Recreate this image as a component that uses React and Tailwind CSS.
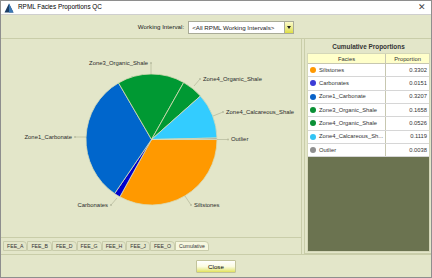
const facies = [
  { name: 'Siltstones', value: 0.3302, color: '#ff9900', dot: '#ff9900' },
  { name: 'Carbonates', value: 0.0151, color: '#0000cc', dot: '#3b3bd6' },
  { name: 'Zone1_Carbonate', value: 0.3207, color: '#0066cc', dot: '#0a62c8' },
  { name: 'Zone3_Organic_Shale', value: 0.1658, color: '#009933', dot: '#0a8f35' },
  { name: 'Zone4_Organic_Shale', value: 0.0526, color: '#009933', dot: '#0a8f35' },
  { name: 'Zone4_Calcareous_Shale', short: 'Zone4_Calcareous_Sh...', value: 0.1119, color: '#33ccff', dot: '#33c4f5' },
  { name: 'Outlier', value: 0.0038, color: '#999999', dot: '#8f8f8f' },
];

// label position + leader line, page coordinates
const labels = [
  { text: 'Siltstones', x: 194, y: 207, anchor: 'start', line: [185, 196, 191, 205] },
  { text: 'Carbonates', x: 108, y: 207, anchor: 'end', line: [117, 198, 111, 205] },
  { text: 'Zone1_Carbonate', x: 72, y: 139, anchor: 'end', line: [86, 137, 75, 137] },
  { text: 'Zone3_Organic_Shale', x: 148, y: 65, anchor: 'end', line: [151, 74, 151, 63] },
  { text: 'Zone4_Organic_Shale', x: 203, y: 81, anchor: 'start', line: [194, 86, 200, 79] },
  { text: 'Zone4_Calcareous_Shale', x: 226, y: 114, anchor: 'start', line: [213, 116, 223, 112] },
  { text: 'Outlier', x: 231, y: 141, anchor: 'start', line: [217, 139.5, 228, 139.5] },
];

const tabs = ['FEE_A', 'FEE_B', 'FEE_D', 'FEE_G', 'FEE_H', 'FEE_J', 'FEE_O', 'Cumulative'];

const CX = 151.5;
const CY = 139.5;
const R = 65.5;

const slicePath = (a0, a1) => {
  const x0 = CX + R * Math.cos(a0);
  const y0 = CY + R * Math.sin(a0);
  const x1 = CX + R * Math.cos(a1);
  const y1 = CY + R * Math.sin(a1);
  const large = a1 - a0 > Math.PI ? 1 : 0;
  return `M${CX},${CY} L${x0},${y0} A${R},${R} 0 ${large} 1 ${x1},${y1} Z`;
};

const PieChart = () => {
  let acc = 0;
  const slices = facies.map((f) => {
    const a0 = acc * Math.PI * 2;
    acc += f.value;
    const a1 = acc * Math.PI * 2;
    return { ...f, d: slicePath(a0, a1) };
  });

  return (
    <svg width="300" height="199" viewBox="1 39 300 199" className="block">
      {slices.map((s) => (
        <path key={s.name} d={s.d} fill={s.color} stroke="#d9dcb6" strokeWidth="0.8" strokeLinejoin="round" />
      ))}
      {labels.map((l) => (
        <g key={l.text}>
          <line x1={l.line[0]} y1={l.line[1]} x2={l.line[2]} y2={l.line[3]} stroke="#b9bca0" strokeWidth="0.8" />
          <circle cx={l.line[2]} cy={l.line[3]} r="1" fill="#b9bca0" />
          <text
            x={l.x}
            y={l.y}
            textAnchor={l.anchor}
            fontSize="5.9"
            fill="#2b2b2b"
            fontFamily="'Liberation Sans', Arial, sans-serif"
          >
            {l.text}
          </text>
        </g>
      ))}
    </svg>
  );
};

const App = () => {
  return (
    <div className="w-[432px] h-[278px] border border-[#8e8e8e] bg-[#e3e6c9] flex flex-col text-[#222] font-['Liberation_Sans',Arial,sans-serif] overflow-hidden">
      {/* title bar */}
      <div className="h-[14px] bg-white flex items-center border-b border-[#cfcfcf] shrink-0">
        <svg width="10" height="10" viewBox="0 0 10 10" className="ml-[3px]">
          <polygon points="5,0.5 9.5,9.5 0.5,9.5" fill="#1d3f66" />
          <polygon points="5,0.5 9.5,9.5 5,9.5" fill="#3a78b5" />
        </svg>
        <span className="ml-[4px] text-[6.4px] leading-none text-black">RPML Facies Proportions QC</span>
        <span className="ml-auto mr-[5px] text-[9px] leading-none text-[#444]">✕</span>
      </div>

      {/* working interval */}
      <div className="h-[24px] flex items-center justify-center border-b border-[#c9cda9] shrink-0">
        <span className="text-[6.2px] mr-[4px] mt-[1px]">Working Interval:</span>
        <div className="flex h-[13px] mt-[1px] border border-[#a9ab98] bg-white">
          <div className="w-[95px] text-[6.2px] leading-[11px] pl-[3px]">&lt;All RPML Working Intervals&gt;</div>
          <div className="w-[9px] border-l border-[#a9ab98] bg-gradient-to-b from-[#fbfbc8] to-[#dede40] flex items-center justify-center">
            <span className="block w-0 h-0 border-l-[2.5px] border-r-[2.5px] border-t-[3px] border-l-transparent border-r-transparent border-t-[#222]" />
          </div>
        </div>
      </div>

      {/* main */}
      <div className="flex flex-1 min-h-0">
        {/* left panel */}
        <div className="w-[301px] flex flex-col border-r border-[#c9cda9]">
          <div className="h-[199px] border-b border-[#c9cda9]">
            <PieChart />
          </div>
          <div className="flex-1 flex items-start pl-[2px] pt-[3px]">
            {tabs.map((t) => {
              const active = t === 'Cumulative';
              return (
                <div
                  key={t}
                  className={`h-[10px] px-[3px] border border-[#c9ccab] rounded-tr-[4px] text-[5.2px] leading-[9px] text-[#333] ${
                    active ? 'bg-[#f6f7df]' : 'bg-[#e3e6c9]'
                  }`}
                >
                  {t}
                </div>
              );
            })}
          </div>
        </div>

        {/* splitter */}
        <div className="w-[3px] border-r border-[#c9cda9]" />

        {/* right panel */}
        <div className="flex-1 flex flex-col pl-[2px] pr-[1px] pb-[1px] border-b border-[#c9cda9]">
          <div className="h-[14px] flex items-center justify-center text-[6.4px] font-bold text-[#333] pt-[1px]">
            Cumulative Proportions
          </div>
          <div className="flex-1 flex flex-col border border-[#d4d7b8] bg-[#6b7350]">
            <div className="flex h-[10px] bg-[#ffffca] border-b border-[#c7c7b0] text-[5.8px] leading-[10px] text-[#333]">
              <div className="w-[78px] text-center border-r border-[#c7c7b0]">Facies</div>
              <div className="flex-1 text-center">Proportion</div>
            </div>
            {facies.map((f) => (
              <div key={f.name} className="flex h-[13.33px] bg-white border-b border-[#d6d6d6] text-[5.8px] text-[#333]">
                <div className="w-[78px] flex items-center border-r border-[#c7c7b0] pl-[2px]">
                  <span className="w-[6px] h-[6px] rounded-full shrink-0" style={{ backgroundColor: f.dot }} />
                  <span className="ml-[3px] whitespace-nowrap">{f.short || f.name}</span>
                </div>
                <div className="flex-1 flex items-center justify-end pr-[2px]">{f.value.toFixed(4)}</div>
              </div>
            ))}
          </div>
        </div>
      </div>

      {/* footer */}
      <div className="h-[23px] border-t border-[#c9cda9] flex items-center justify-center shrink-0">
        <div className="w-[40px] h-[13px] border border-[#c2c39a] rounded-[1px] bg-gradient-to-b from-white via-[#fbfbe0] to-[#e3e35a] text-[6.2px] leading-[11px] text-center text-black">
          Close
        </div>
      </div>
    </div>
  );
};

export default App;
